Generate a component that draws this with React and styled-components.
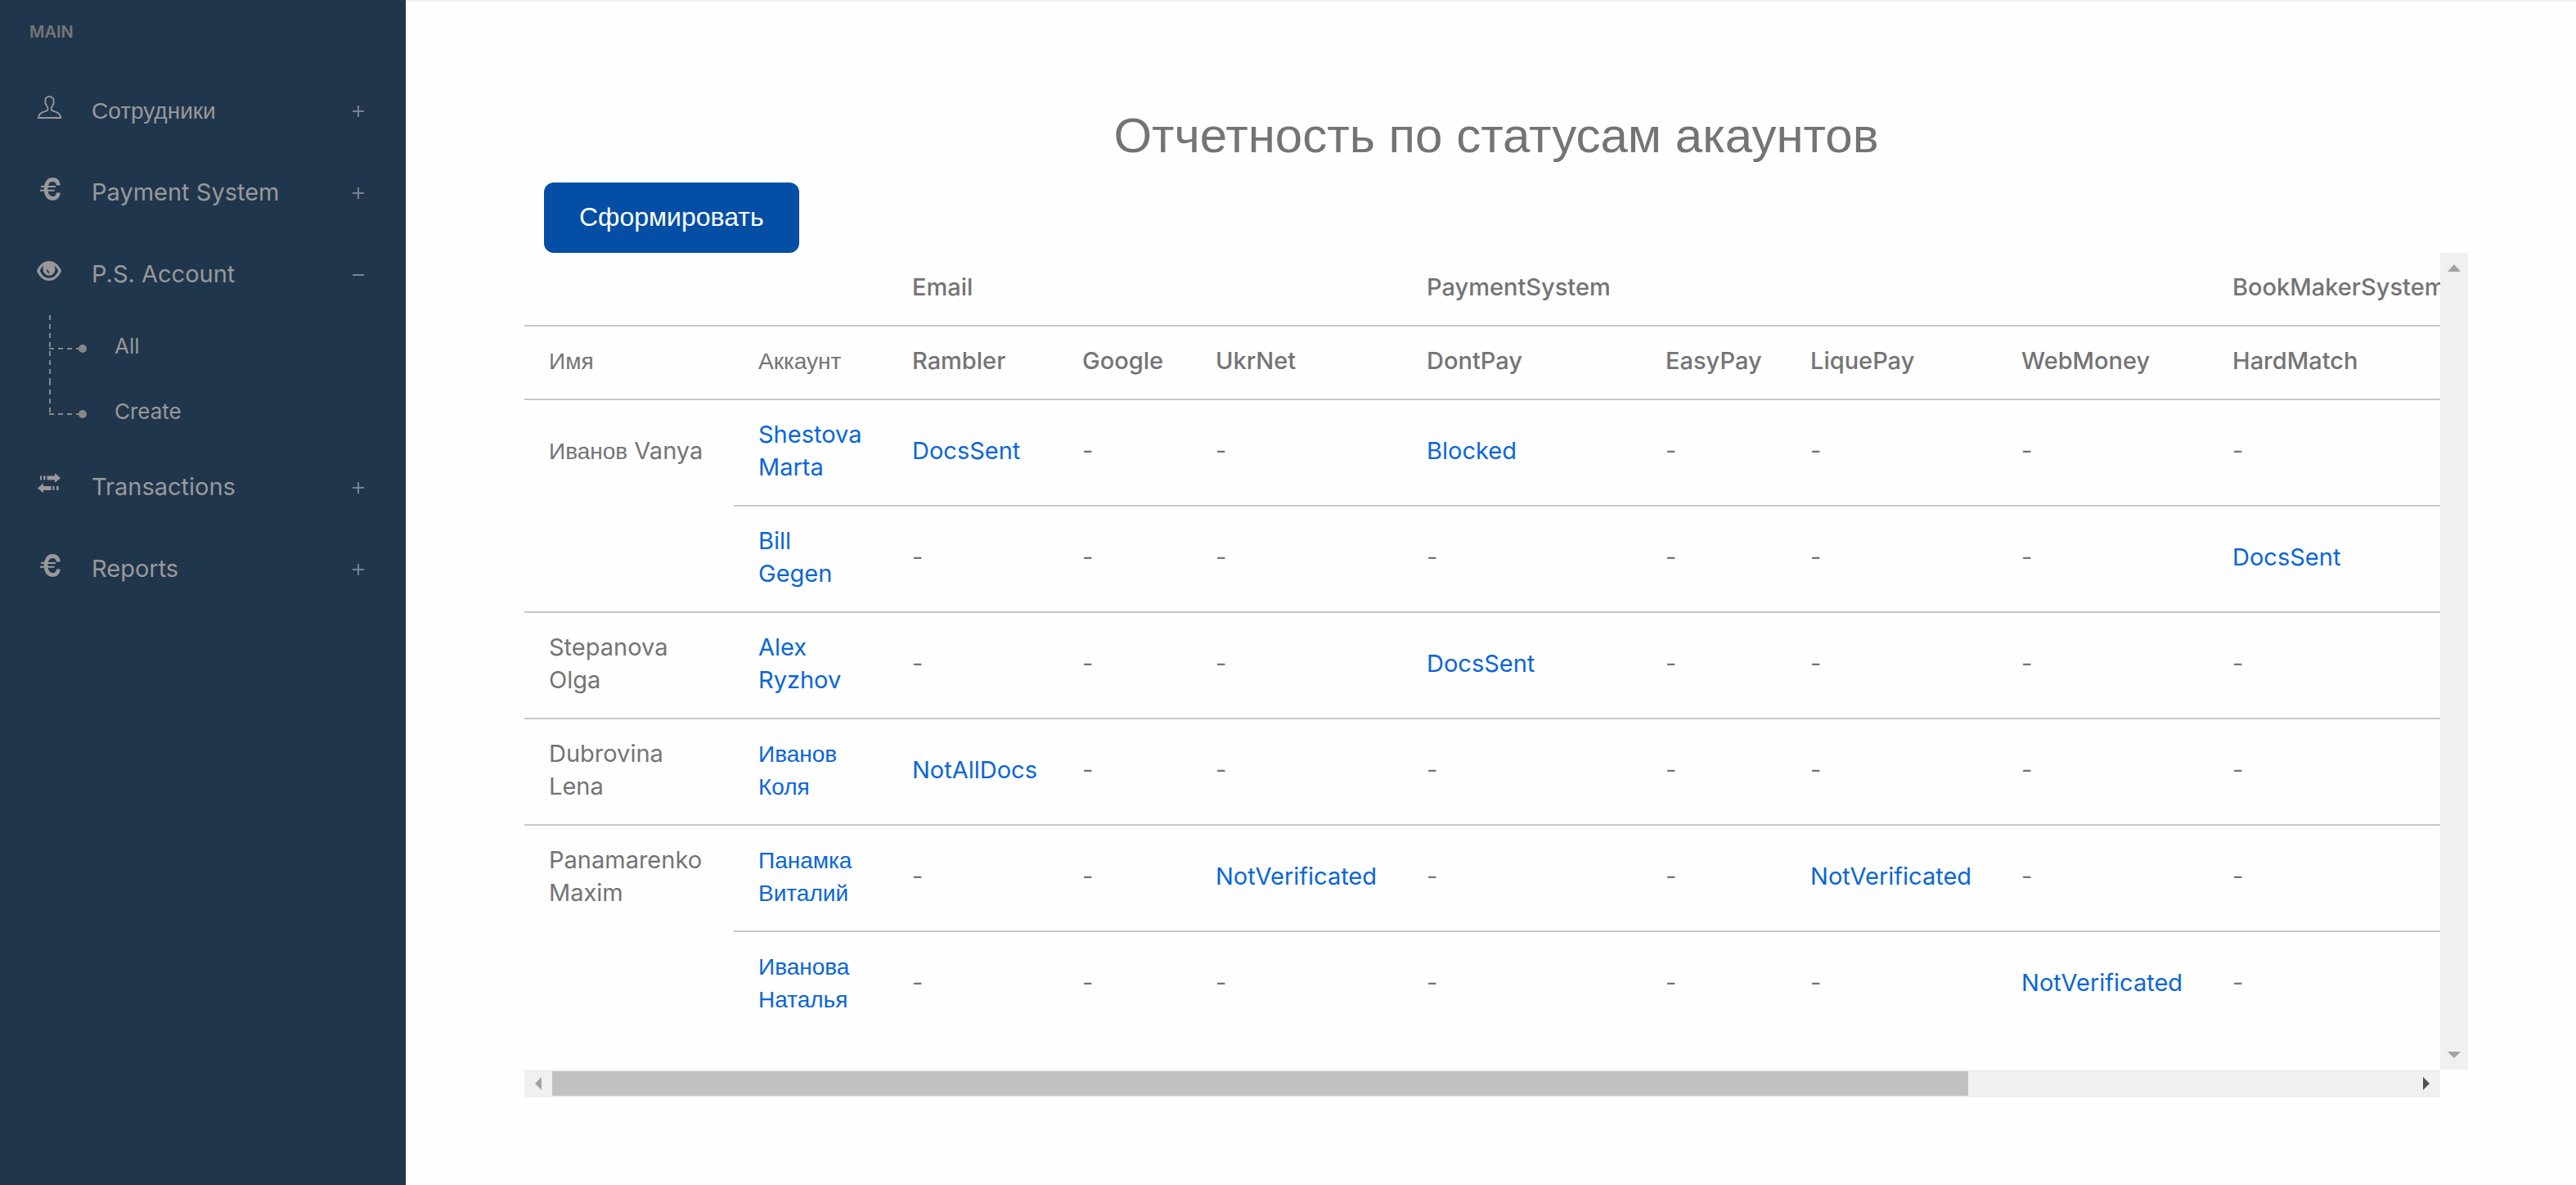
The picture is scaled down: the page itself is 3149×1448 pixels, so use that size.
import React from "react";
import styled, { createGlobalStyle } from "styled-components";

const LATIN = '"Inter", "Liberation Sans", sans-serif';
const CYRILLIC = '"Liberation Sans", Arial, sans-serif';

const GlobalStyle = createGlobalStyle`
  *, *::before, *::after { box-sizing: border-box; }
  body { margin: 0; background: #fefefe; }
`;

const Page = styled.div`
  display: flex;
  min-height: 100vh;
  font: 400 29px/40px ${LATIN};
  color: #747474;
`;

const Sidebar = styled.nav`
  flex: 0 0 496px;
  background: #20364d;
  color: #999;
`;

const SidebarCaption = styled.div`
  padding: 24px 36px;
  height: 85px;
  font-size: 20px;
  line-height: 30px;
  font-weight: 600;
  color: #777;
`;

const Menu = styled.ul`
  list-style: none;
  margin: 0;
  padding: 0;
`;

const MenuButton = styled.button`
  display: grid;
  grid-template-columns: 32px 1fr 16px;
  column-gap: 36px;
  align-items: center;
  width: 100%;
  height: 100px;
  padding: 0 50px 0 44px;
  border: 0;
  background: none;
  font: inherit;
  color: inherit;
  text-align: left;
  cursor: pointer;
`;

const Glyph = styled.svg`
  display: block;
  width: 32px;
  height: 32px;
  margin-bottom: 8px;
  fill: currentColor;
`;

const Toggle = styled.svg`
  display: block;
  width: 16px;
  height: 16px;
  stroke: #7b8289;
  stroke-width: 2;
`;

const Submenu = styled.ul`
  list-style: none;
  margin: 0;
  padding: 0;
`;

const SubmenuItem = styled.li`
  display: grid;
  grid-template-columns: 60px 46px 1fr;
  height: 80px;
`;

const Branch = styled.svg`
  grid-column: 2;
  width: 46px;
  height: 80px;
  fill: #888;
  stroke: #888;
`;

const SubmenuLink = styled.a`
  padding: 18px 34px;
  font-size: 26px;
  color: inherit;
  text-decoration: none;
`;

const Main = styled.main`
  flex: 1;
  min-width: 0;
  padding: 128px 132px 106px 145px;
  border-top: 2px solid #f0f0f0;
`;

const Title = styled.h1`
  margin: 0;
  font: 400 60px/72px ${CYRILLIC};
  text-align: center;
`;

const Actions = styled.div`
  display: flex;
  padding: 21px 24px 0;
`;

const SubmitButton = styled.button`
  height: 86px;
  padding: 0 43px 2px;
  border: 0;
  border-radius: 12px;
  background: #044fa5;
  color: #fff;
  font: 400 32px/40px ${CYRILLIC};
  cursor: pointer;
`;

const Report = styled.section`
  display: grid;
  grid-template-columns: minmax(0, 1fr) 34px;
`;

const Viewport = styled.div`
  overflow: hidden;
  padding-bottom: 40px;
`;

const Table = styled.table`
  table-layout: fixed;
  width: 3077px;
  border-collapse: separate;
  border-spacing: 0;
`;

const Cell = styled.td`
  padding: 22px 30px 26px;
  border-top: ${(p) => (p.$plain ? "0" : "2px solid #c8c8c8")};
`;

const HeadCell = styled(Cell).attrs({ as: "th" })`
  font-weight: 500;
  text-align: left;
`;

const Text = styled.span`
  font-family: ${(p) => (p.$cyrillic ? CYRILLIC : LATIN)};
  font-size: ${(p) => (p.$cyrillic ? "28px" : "inherit")};
  font-weight: ${(p) => (p.$cyrillic ? 400 : "inherit")};
  line-height: 1;
`;

const StatusLink = styled.a`
  color: #0a66d8;
  text-decoration: none;
`;

const Bar = styled.div`
  display: flex;
  flex-direction: ${(p) => (p.$vertical ? "column" : "row")};
  justify-content: space-between;
  background: #f0f0f0;
  ${(p) => (p.$vertical ? "width: 34px;" : "height: 34px;")}
`;

const Arrow = styled.svg`
  flex: none;
  width: 34px;
  height: 34px;
  fill: ${(p) => (p.$active ? "#505050" : "#a3a3a3")};
`;

const Track = styled.div`
  flex: 1;
  padding: 2px 0;
`;

const Thumb = styled.div`
  width: 76.1%;
  height: 100%;
  background: #c1c1c1;
`;

/* Cyrillic words fall back to the Arial-like face, Latin ones keep the main face */
function Words({ children }) {
  return children.split(" ").map((word, i) => (
    <React.Fragment key={i}>
      {i > 0 && " "}
      <Text $cyrillic={/[\u0400-\u04ff]/.test(word)}>{word}</Text>
    </React.Fragment>
  ));
}

const icons = {
  user: (
    <path
      d="M12.800 4.300c1.500-1.900 5.500-1.900 6.800 0 1.700.5 2.300 2.200 1.900 4.700.6 1.600.2 3-.8 3.800-.4 1.700-1 2.600-1.900 3.500v2.800c.5 1.300 3 1.900 5.500 2.700 3.500 1.200 5.600 3.200 5.900 7.200H3c.3-4 2.400-6 5.900-7.200 2.500-.8 5-1.400 5.500-2.700v-2.800c-1-.9-1.600-1.900-2-3.500-1-.8-1.400-2.200-.8-3.800-.4-2.500-.4-3.900 1.200-4.700z"
      fill="none"
      stroke="currentColor"
      strokeWidth="1.800"
    />
  ),
  euro: (
    <g fill="none" stroke="currentColor">
      <path
        d="M27.500 11.500C26.800 7 24 4.500 20.300 4.500 15 4.500 12 9.500 12 16s3 11.500 8.300 11.500c3.700 0 6.500-2.500 7.200-7"
        strokeWidth="4.800"
      />
      <path d="M6 13H24M5 17.800H22.500" strokeWidth="2" />
    </g>
  ),
  eye: (
    <path
      fillRule="evenodd"
      d="M1 16C4 8.500 9.500 4 16 4S28 8.500 31 16c-3 7.500-8.500 12-15 12S4 23.500 1 16zm3.800 0c1.500 3.800 3.700 6.400 6.400 7.700 2.900 1.400 6.700 1.400 9.600 0 2.700-1.300 4.900-3.900 6.400-7.700-1.100-2.800-2.700-5-4.700-6.400.7 1.400 1 2.900 1 4.600a7.500 7.500 0 0 1-15 0c0-1.700.4-3.200 1-4.600-2 1.400-3.600 3.600-4.700 6.400zm8.300-2.500c-.5 2.900.9 5.300 3.800 5.600-.9-1-1.300-2-1.200-3.200-1.300-.3-2.200-1.200-2.600-2.400z"
    />
  ),
  transfer: (
    <path d="M5 6.500h2v5H5zM9 6.500h2.500v5H9zM13.500 6.500H23V3l7 6-7 6v-3.500h-9.500zM9 19h9.500v5H9v3.500l-7-6 7-6zM20.500 19h2v5h-2zM25 19h2.500v5H25z" />
  ),
};

const menu = [
  { icon: "user", label: "Сотрудники" },
  { icon: "euro", label: "Payment System" },
  { icon: "eye", label: "P.S. Account", children: ["All", "Create"] },
  { icon: "transfer", label: "Transactions" },
  { icon: "euro", label: "Reports" },
];

const columnWidths = [256, 188, 208, 163, 258, 292, 177, 258, 258, 260];
const services = ["Rambler", "Google", "UkrNet", "DontPay", "EasyPay", "LiquePay", "WebMoney", "HardMatch"];

const owners = [
  {
    name: "Иванов Vanya",
    accounts: [
      { name: "Shestova Marta", statuses: { Rambler: "DocsSent", DontPay: "Blocked" } },
      { name: "Bill Gegen", statuses: { HardMatch: "DocsSent" } },
    ],
  },
  { name: "Stepanova Olga", accounts: [{ name: "Alex Ryzhov", statuses: { DontPay: "DocsSent" } }] },
  { name: "Dubrovina Lena", accounts: [{ name: "Иванов Коля", statuses: { Rambler: "NotAllDocs" } }] },
  {
    name: "Panamarenko Maxim",
    accounts: [
      { name: "Панамка Виталий", statuses: { UkrNet: "NotVerificated", LiquePay: "NotVerificated" } },
      { name: "Иванова Наталья", statuses: { WebMoney: "NotVerificated" } },
    ],
  },
];

function TreeBranch({ last }) {
  return (
    <Branch viewBox="0 0 46 80" aria-hidden="true">
      <path d={last ? "M1 0V42" : "M1 0V80"} strokeWidth="2" strokeDasharray="6 5" fill="none" />
      <path d="M0 41H36" strokeWidth="2" strokeDasharray="6 5" fill="none" />
      <circle cx="41" cy="41" r="5" stroke="none" />
    </Branch>
  );
}

function MenuEntry({ item }) {
  const open = Boolean(item.children);
  return (
    <li>
      <MenuButton type="button" aria-expanded={open}>
        <Glyph viewBox="0 0 32 32" aria-hidden="true">{icons[item.icon]}</Glyph>
        <span><Words>{item.label}</Words></span>
        <Toggle viewBox="0 0 16 16" aria-hidden="true">
          <path d={open ? "M1 9H15" : "M1 9H15M8 2V16"} />
        </Toggle>
      </MenuButton>
      {open && (
        <Submenu>
          {item.children.map((child, i) => (
            <SubmenuItem key={child}>
              <TreeBranch last={i === item.children.length - 1} />
              <SubmenuLink href="#">{child}</SubmenuLink>
            </SubmenuItem>
          ))}
        </Submenu>
      )}
    </li>
  );
}

function OwnerRows({ owner }) {
  return owner.accounts.map((account, i) => (
    <tr key={account.name}>
      <Cell $plain={i > 0}>{i === 0 && <Words>{owner.name}</Words>}</Cell>
      <Cell>
        <StatusLink href="#"><Words>{account.name}</Words></StatusLink>
      </Cell>
      {services.map((service) => (
        <Cell key={service}>
          {account.statuses[service] ? <StatusLink href="#">{account.statuses[service]}</StatusLink> : "-"}
        </Cell>
      ))}
      <Cell colSpan={2} />
    </tr>
  ));
}

export default function App() {
  return (
    <Page>
      <GlobalStyle />
      <Sidebar>
        <SidebarCaption>MAIN</SidebarCaption>
        <Menu>
          {menu.map((item) => <MenuEntry key={item.label} item={item} />)}
        </Menu>
      </Sidebar>
      <Main>
        <Title>Отчетность по статусам акаунтов</Title>
        <Actions>
          <SubmitButton type="button">Сформировать</SubmitButton>
        </Actions>
        <Report>
          <Viewport>
            <Table>
              <colgroup>
                {columnWidths.map((width, i) => <col key={i} width={width} />)}
                <col />
              </colgroup>
              <thead>
                <tr>
                  <Cell $plain colSpan={2} />
                  <HeadCell $plain colSpan={3}>Email</HeadCell>
                  <HeadCell $plain colSpan={4}>PaymentSystem</HeadCell>
                  <HeadCell $plain colSpan={3}>BookMakerSystem</HeadCell>
                </tr>
                <tr>
                  <HeadCell><Words>Имя</Words></HeadCell>
                  <HeadCell><Words>Аккаунт</Words></HeadCell>
                  {services.map((service) => <HeadCell key={service}>{service}</HeadCell>)}
                  <Cell colSpan={2} />
                </tr>
              </thead>
              <tbody>
                {owners.map((owner) => <OwnerRows key={owner.name} owner={owner} />)}
              </tbody>
            </Table>
          </Viewport>
          <Bar $vertical aria-hidden="true">
            <Arrow viewBox="0 0 34 34"><path d="M17 14L25 23H9z" /></Arrow>
            <Arrow viewBox="0 0 34 34"><path d="M9 12H25L17 20z" /></Arrow>
          </Bar>
          <Bar aria-hidden="true">
            <Arrow viewBox="0 0 34 34"><path d="M21 9V25L13 17z" /></Arrow>
            <Track><Thumb /></Track>
            <Arrow $active viewBox="0 0 34 34"><path d="M13 9V25L21 17z" /></Arrow>
          </Bar>
        </Report>
      </Main>
    </Page>
  );
}
